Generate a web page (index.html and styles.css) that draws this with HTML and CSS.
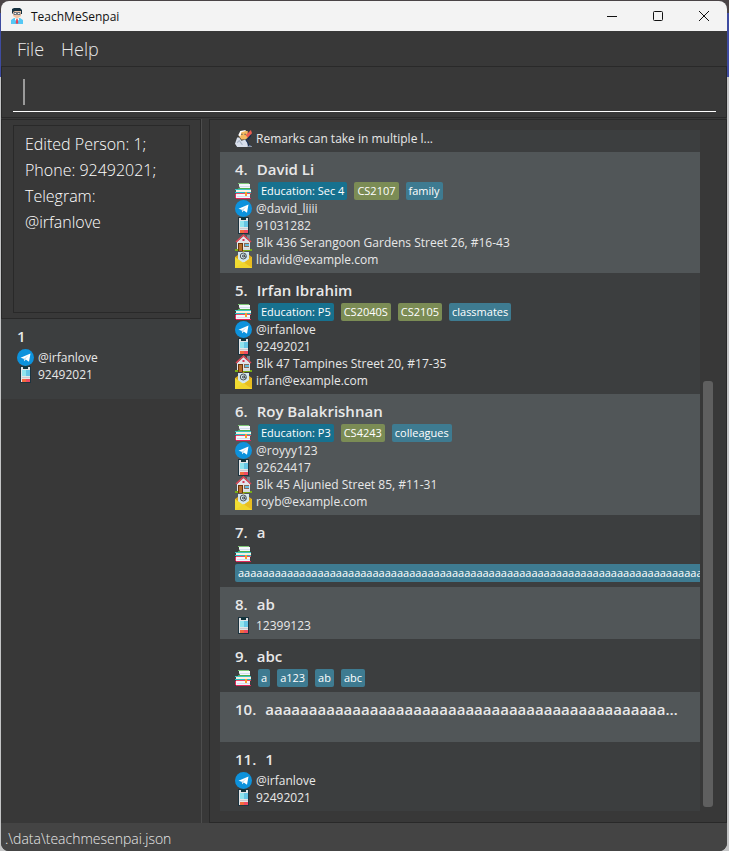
FILE: index.html
```html
<!DOCTYPE html>
<html lang="en">
<head>
<meta charset="utf-8">
<title>TeachMeSenpai</title>
<link rel="stylesheet" href="styles.css">
</head>
<body>
<svg class="sprite" aria-hidden="true">
  <symbol id="books" viewBox="0 0 16 16">
    <path d="M3 0h11v1H3z" fill="#7cc576"/><path d="M4 1h11v4H5L4 3z" fill="#f4f7fb"/><path d="M5 3h10v1H5z" fill="#d5def0"/><path d="M3 5h12v1H3z" fill="#4caf50"/>
    <path d="M0 6h16v1H0z" fill="#3fc1c0"/><path d="M1 7h15v2H1z" fill="#f7efe2"/><path d="M0 9h16v1H0z" fill="#20bfc4"/>
    <path d="M1 10h15v1H1z" fill="#ee4866"/><path d="M1 11h14v4H1z" fill="#f4f7fb"/><path d="M2 13h13v1H2z" fill="#d5def0"/><path d="M0 11h1v4H0zM1 15h15v1H1z" fill="#e0265a"/><path d="M10 9h2v4h-2z" fill="#f6a12c"/>
  </symbol>
  <symbol id="telegram" viewBox="0 0 17 17">
    <circle cx="8.500" cy="8.500" r="8.500" fill="#0d92dc"/>
    <path d="M3.500 8.700 13.500 4.500 12 12.700 8.700 10.600 7.300 12.300 6.700 9.700z" fill="#fff"/><path d="M7 9.700 11.500 6.200 8 10.200 7.300 12.300z" fill="#b5d6e8"/>
  </symbol>
  <symbol id="phone" viewBox="0 0 17 17">
    <path d="M3 0h11v17H3z" fill="#1c3440"/><path d="M4 1h9v15H4z" fill="#e3e4e6"/><path d="M6 0h5v3H6z" fill="#12343c"/><path d="M5 4h4v6H5z" fill="#91e4ee"/><path d="M9 4h4v6H9z" fill="#66c5e4"/><path d="M5 11h8v1H5z" fill="#c9cbd0"/><path d="M5 13h4v3H5z" fill="#f36c3d"/><path d="M9 13h4v3H9z" fill="#f04a62"/>
  </symbol>
  <symbol id="house" viewBox="0 0 17 17">
    <path d="M12 1h3v6h-3z" fill="#75878f"/><path d="M2 8 8.500 2 15 8v8H2z" fill="#e1e4ea"/><path d="M0 15h17v2H0z" fill="#78ab18"/><path d="M3 9h5v8H3z" fill="#6b350d"/><path d="M4 10h3v7H4z" fill="#b66b28"/><path d="M9 9h5v4H9z" fill="#8d6b54"/><path d="M10 10h4v2h-4z" fill="#65bce0"/><path d="M1 8 8.500 1 16 8" fill="none" stroke="#df4555" stroke-width="1.500"/><path d="M7.500 5h2v2h-2z" fill="#d43551"/><path d="M8 14h7v2H8z" fill="#d8dde1"/>
  </symbol>
  <symbol id="mail" viewBox="0 0 17 17">
    <path d="M0 6 8.500 0 17 6v11H0z" fill="#dba61c"/><path d="M3 1h11v12H3z" fill="#d4e6ed"/><path d="M0 6 8.500 12 17 6v11H0z" fill="#f0dc32"/><path d="M17 6v11L8.500 12z" fill="#e8bd20"/><path d="M0 17 8.500 11 17 17z" fill="#f0d52d"/>
    <circle cx="8.300" cy="5" r="3" fill="none" stroke="#4d5358"/><circle cx="8.300" cy="5" r="1" fill="none" stroke="#4d5358"/><path d="M9.500 3.500V6h2" fill="none" stroke="#4d5358"/>
  </symbol>
  <symbol id="remark" viewBox="0 0 16 16">
    <path d="M5 1h7v6l-2 2H6L4 6z" fill="#f4b95f"/><path d="M3 5 5 1 10 0v1L6 2 5 6z" fill="#fff"/><path d="M2 7h2l2 3 4-1 2 3v4H2l-2-3z" fill="#d9e0ec"/><path d="m10 5 5-5 1 3-4 4z" fill="#ed5c50"/><path d="m12 15 2-1 2 2h-3z" fill="#eef2f7"/><path d="m10 9 2 3 1 3h2M12 9l3-4M6 4h1M9 4h1" fill="none" stroke="#152d55"/><path d="M2 12 4 10 7 14" fill="none" stroke="#aab6c9"/>
  </symbol>
</svg>

<div class="window">
  <header class="titlebar">
    <svg class="app-icon" viewBox="0 0 12 16" aria-hidden="true"><path d="M0 16v-4l3-2h6l3 2v4z" fill="#55c8f5"/><path d="M2 3h8v5L7 10v2H5v-2L2 8z" fill="#f1c5a6"/><path d="M1 5V1l2-1h6l2 2v4h-1V3H4L2 4v2z" fill="#16303f"/><path d="M3 4.500h2.500v2H3zM6.500 4.500H9v2H6.500z" fill="#f6f8f9" stroke="#34495a" stroke-width=".7"/><path d="m4 10 2 1 2-1v2l-2 1-2-1z" fill="#fff"/><path d="M5.300 11h1.400l.6 4L6 16l-1.300-1z" fill="#e64255"/></svg>
    <h1 class="title">TeachMeSenpai</h1>
    <button class="win-button" aria-label="Minimize"><svg viewBox="0 0 12 12"><path d="M1 6.500h10"/></svg></button>
    <button class="win-button" aria-label="Maximize"><svg viewBox="0 0 12 12"><rect x="1.500" y="1.500" width="9" height="9" rx="1"/></svg></button>
    <button class="win-button" aria-label="Close"><svg viewBox="0 0 12 12"><path d="m1 1 10 10M11 1 1 11"/></svg></button>
  </header>
  <nav class="menubar"><button class="menu">File</button><button class="menu">Help</button></nav>
  <div class="command"><input class="command-input" type="text" aria-label="Command"><span class="caret"></span></div>

  <main class="panes">
    <aside class="side">
      <div class="result"><textarea class="result-text" aria-label="Result" readonly>Edited Person: 1; Phone: 92492021; Telegram: @irfanlove</textarea></div>
      <section class="selected">
        <h2 class="name">1</h2>
        <p class="line"><svg class="icon"><use href="#telegram"/></svg>@irfanlove</p>
        <p class="line"><svg class="icon"><use href="#phone"/></svg>92492021</p>
      </section>
    </aside>
    <section class="list-pane">
      <ul class="people">
        <li class="person continued"><p class="line"><svg class="icon"><use href="#remark"/></svg>Remarks can take in multiple l...</p></li>
        <li class="person">
          <h2 class="name"><span>4.</span><span>David Li</span></h2>
          <div class="tags"><svg class="books"><use href="#books"/></svg><span class="tag education">Education: Sec 4</span><span class="tag module">CS2107</span><span class="tag">family</span></div>
          <p class="line"><svg class="icon"><use href="#telegram"/></svg>@david_liiii</p>
          <p class="line"><svg class="icon"><use href="#phone"/></svg>91031282</p>
          <p class="line"><svg class="icon"><use href="#house"/></svg>Blk 436 Serangoon Gardens Street 26, #16-43</p>
          <p class="line"><svg class="icon"><use href="#mail"/></svg>lidavid@example.com</p>
        </li>
        <li class="person">
          <h2 class="name"><span>5.</span><span>Irfan Ibrahim</span></h2>
          <div class="tags"><svg class="books"><use href="#books"/></svg><span class="tag education">Education: P5</span><span class="tag module">CS2040S</span><span class="tag module">CS2105</span><span class="tag">classmates</span></div>
          <p class="line"><svg class="icon"><use href="#telegram"/></svg>@irfanlove</p>
          <p class="line"><svg class="icon"><use href="#phone"/></svg>92492021</p>
          <p class="line"><svg class="icon"><use href="#house"/></svg>Blk 47 Tampines Street 20, #17-35</p>
          <p class="line"><svg class="icon"><use href="#mail"/></svg>irfan@example.com</p>
        </li>
        <li class="person">
          <h2 class="name"><span>6.</span><span>Roy Balakrishnan</span></h2>
          <div class="tags"><svg class="books"><use href="#books"/></svg><span class="tag education">Education: P3</span><span class="tag module">CS4243</span><span class="tag">colleagues</span></div>
          <p class="line"><svg class="icon"><use href="#telegram"/></svg>@royyy123</p>
          <p class="line"><svg class="icon"><use href="#phone"/></svg>92624417</p>
          <p class="line"><svg class="icon"><use href="#house"/></svg>Blk 45 Aljunied Street 85, #11-31</p>
          <p class="line"><svg class="icon"><use href="#mail"/></svg>royb@example.com</p>
        </li>
        <li class="person">
          <h2 class="name"><span>7.</span><span>a</span></h2>
          <div class="tags"><svg class="books"><use href="#books"/></svg><span class="tag">aaaaaaaaaaaaaaaaaaaaaaaaaaaaaaaaaaaaaaaaaaaaaaaaaaaaaaaaaaaaaaaaaaaaaaaaaaaaaaaa</span></div>
        </li>
        <li class="person">
          <h2 class="name"><span>8.</span><span>ab</span></h2>
          <p class="line"><svg class="icon"><use href="#phone"/></svg>12399123</p>
        </li>
        <li class="person">
          <h2 class="name"><span>9.</span><span>abc</span></h2>
          <div class="tags"><svg class="books"><use href="#books"/></svg><span class="tag">a</span><span class="tag">a123</span><span class="tag">ab</span><span class="tag">abc</span></div>
        </li>
        <li class="person">
          <h2 class="name"><span>10.</span><span class="full-name">aaaaaaaaaaaaaaaaaaaaaaaaaaaaaaaaaaaaaaaaaaaaaaa...</span></h2>
        </li>
        <li class="person">
          <h2 class="name"><span>11.</span><span>1</span></h2>
          <p class="line"><svg class="icon"><use href="#telegram"/></svg>@irfanlove</p>
          <p class="line"><svg class="icon"><use href="#phone"/></svg>92492021</p>
        </li>
      </ul>
      <div class="scrollbar"><div class="thumb"></div></div>
    </section>
  </main>
  <footer class="status">.\data\teachmesenpai.json</footer>
</div>
</body>
</html>
```
FILE: styles.css
```css
* { box-sizing: border-box; }
body {
  margin: 0;
  padding: 1px 2px 0 1px;
  font-family: "Open Sans", "Noto Sans", sans-serif;
  background: linear-gradient(#4a4446 13px, #3e4ba0 13px, #3e4ba0 77px, #c4c5c6 77px);
}
.sprite { position: absolute; width: 0; height: 0; }
.window {
  min-height: calc(100vh - 1px);
  display: flex;
  flex-direction: column;
  overflow: hidden;
  border-radius: 8px;
  background: #383838;
  color: #e8e8e8;
}
button { border: 0; padding: 0; background: none; font: inherit; color: inherit; }
.titlebar { display: flex; align-items: center; height: 30px; padding-left: 10px; background: #f3f3f3; color: #111; }
.app-icon { width: 12px; height: 16px; margin-right: 8px; }
.title { flex: 1; margin: 0; font-size: 12px; font-weight: 400; }
.win-button { width: 46px; height: 30px; display: grid; place-items: center; }
.win-button svg { width: 12px; height: 12px; fill: none; stroke: #111; }
.menubar { display: flex; gap: 17px; height: 36px; padding: 0 16px; border-bottom: 1px solid #292929; }
.menu { font-size: 18px; font-weight: 300; }
.command { position: relative; height: 51px; padding: 0 10px 6px 11px; border: 1px solid #292929; border-top: 0; }
.command-input {
  display: block;
  width: 100%;
  height: 45px;
  padding: 0 10px;
  border: 0;
  border-bottom: 1px solid #fff;
  outline: 0;
  background: transparent;
  color: #fff;
  font: 300 18px "Open Sans", sans-serif;
}
.caret { position: absolute; left: 21px; top: 12px; width: 2px; height: 26px; background: #9a9a9a; }
.panes { flex: 1; display: flex; padding-top: 1px; }
.side { flex: 0 0 201px; border-right: 1px solid #4d4d4d; }
.result { height: 200px; padding: 5px 10px 5px 11px; border: 1px solid #292929; }
.result-text {
  display: block;
  width: 100%;
  height: 188px;
  padding: 5px 20px 5px 11px;
  border: 1px solid #292929;
  outline: 0;
  resize: none;
  background: transparent;
  color: #fff;
  font: 300 16px/26px "Open Sans", sans-serif;
}
.selected { height: 80px; padding: 5px 16px; background: #3c3e3f; }
.list-pane { flex: 1; min-width: 0; display: flex; margin-left: 7px; padding: 10px 13px 11px 10px; border: 1px solid #292929; }
.people { flex: 1; min-width: 0; margin: 0; padding: 0; list-style: none; }
.person { min-height: 50px; padding: 5px 15px; overflow: hidden; background: #3c3e3f; }
.person:nth-child(even) { background: #515658; }
.continued { min-height: 0; padding-top: 0; }
.name { display: flex; gap: 9px; margin: 0; font-size: 15px; font-weight: 600; line-height: 25px; white-space: nowrap; }
.full-name { min-width: 0; overflow: hidden; text-overflow: ellipsis; }
.tags { display: flex; flex-wrap: wrap; gap: 1px 7px; }
.books { width: 16px; height: 18px; }
.tag { padding: 0 3px; border-radius: 2px; background: #3e7b91; color: #fff; font-size: 11px; line-height: 18px; }
.education { background: #17718f; }
.module { background: #7b8c55; }
.line { display: flex; gap: 4px; margin: 0; font-size: 12px; line-height: 17px; white-space: nowrap; }
.icon { flex: none; width: 17px; height: 17px; }
.scrollbar { display: flex; flex-direction: column; justify-content: flex-end; width: 10px; margin-left: 3px; padding-bottom: 4px; }
.thumb { height: 63%; border-radius: 3px; background: #5f5f5f; }
.status { height: 28px; padding: 0 4px; background: #444; font-size: 14px; font-weight: 300; line-height: 32px; }
```
